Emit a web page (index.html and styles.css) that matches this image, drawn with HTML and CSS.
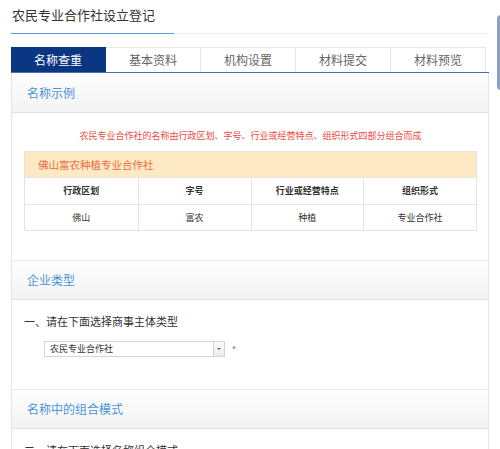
FILE: index.html
```html
<!DOCTYPE html>
<html lang="zh-CN">
<head>
<meta charset="utf-8">
<title>农民专业合作社设立登记</title>
<link rel="stylesheet" href="styles.css">
</head>
<body>
<div class="page">
  <div class="title">
    <div class="title-text">农民专业合作社设立登记</div>
    <div class="title-rest"></div>
  </div>
  <div class="tabs">
    <div class="tab active">名称查重</div>
    <div class="tab">基本资料</div>
    <div class="tab">机构设置</div>
    <div class="tab">材料提交</div>
    <div class="tab">材料预览</div>
  </div>
  <div class="panel">
    <div class="sec-head first">名称示例</div>
    <div class="sec-body example">
      <div class="note">农民专业合作社的名称由行政区划、字号、行业或经营特点、组织形式四部分组合而成</div>
      <div class="tbl">
        <div class="tbl-name">佛山富农种植专业合作社</div>
        <div class="tbl-row head">
          <div class="cell">行政区划</div>
          <div class="cell">字号</div>
          <div class="cell">行业或经营特点</div>
          <div class="cell">组织形式</div>
        </div>
        <div class="tbl-row data">
          <div class="cell">佛山</div>
          <div class="cell">富农</div>
          <div class="cell">种植</div>
          <div class="cell">专业合作社</div>
        </div>
      </div>
    </div>
    <div class="sec-head">企业类型</div>
    <div class="sec-body form">
      <div class="question">一、请在下面选择商事主体类型</div>
      <div class="select-line">
        <div class="select">
          <span class="select-value">农民专业合作社</span>
          <span class="select-arrow"></span>
        </div>
        <span class="required">*</span>
      </div>
    </div>
    <div class="sec-head">名称中的组合模式</div>
    <div class="sec-body form">
      <div class="question">二、请在下面选择名称组合模式</div>
    </div>
  </div>
</div>
<div class="side-tab"></div>
</body>
</html>
```

FILE: styles.css
```css
html, body {
  margin: 0;
  padding: 0;
  background: #fff;
}
body {
  font-family: "Noto Sans CJK SC", "Noto Sans", sans-serif;
  color: #333;
  overflow: hidden;
}
.page {
  width: 478px;
  padding-left: 11px;
}
.title {
  display: flex;
}
.title-text {
  width: 162px;
  height: 33px;
  line-height: 30px;
  padding-left: 1px;
  font-size: 13px;
  color: #333;
  border-bottom: 1px solid #5b9bdb;
}
.title-rest {
  flex: 1;
  border-bottom: 1px solid #eaf1f9;
}
.tabs {
  display: flex;
  margin-top: 13px;
  height: 25px;
  border-bottom: 1px solid #4470ad;
}
.tab {
  box-sizing: border-box;
  width: 95px;
  height: 25px;
  line-height: 24px;
  text-align: center;
  font-size: 12px;
  color: #666;
  border-top: 1px solid #e6e6e6;
  border-right: 1px solid #e6e6e6;
}
.tab.active {
  background: #0b3682;
  border-color: #0b3682;
  color: #fff;
}
.panel {
  border-left: 1px solid #e6e6e6;
  border-right: 1px solid #e6e6e6;
}
.sec-head {
  height: 38px;
  line-height: 38px;
  padding-left: 15px;
  font-size: 12px;
  color: #4a94d8;
  background: linear-gradient(#fefefe, #f3f3f3);
  border-top: 1px solid #e8e8e8;
  border-bottom: 1px solid #e2e2e2;
}
.sec-head.first {
  height: 39px;
  line-height: 39px;
  border-top: 0;
}
.sec-body.example {
  padding: 16px 11px 29px 12px;
}
.note {
  height: 13px;
  line-height: 13px;
  font-size: 9px;
  color: #ee4b3e;
  text-align: center;
}
.tbl {
  margin-top: 9px;
  border: 1px solid #e4e4e4;
}
.tbl-name {
  height: 25px;
  line-height: 25px;
  padding-left: 13px;
  background: #fde9c4;
  color: #ef6a3f;
  font-size: 10.5px;
}
.tbl-row {
  display: grid;
  grid-template-columns: 1fr 1fr 1fr 1fr;
  border-top: 1px solid #e4e4e4;
}
.tbl-row .cell {
  text-align: center;
  font-size: 9px;
  color: #333;
}
.tbl-row .cell + .cell {
  border-left: 1px solid #e4e4e4;
}
.tbl-row.head .cell {
  height: 26px;
  line-height: 26px;
  font-weight: bold;
}
.tbl-row.data .cell {
  height: 25px;
  line-height: 25px;
}
.sec-body.form {
  padding: 14px 12px 32px 12px;
}
.question {
  height: 14px;
  line-height: 14px;
  font-size: 11px;
  color: #333;
}
.select-line {
  display: flex;
  align-items: center;
  margin-top: 13px;
  margin-left: 20px;
}
.select {
  box-sizing: border-box;
  width: 181px;
  height: 16px;
  display: flex;
  border: 1px solid #d4d4d4;
  background: #fff;
}
.select-value {
  flex: 1;
  font-size: 9px;
  line-height: 14px;
  padding-left: 5px;
  color: #333;
}
.select-arrow {
  width: 10px;
  border-left: 1px solid #d4d4d4;
  background: linear-gradient(#fafafa, #ececec);
  position: relative;
}
.select-arrow::after {
  content: "";
  position: absolute;
  left: 3px;
  top: 6px;
  border-left: 2px solid transparent;
  border-right: 2px solid transparent;
  border-top: 2px solid #666;
}
.required {
  margin-left: 7px;
  font-size: 9px;
  line-height: 9px;
  color: #ef4b4b;
}
.side-tab {
  position: fixed;
  left: 497px;
  top: 15px;
  width: 12px;
  height: 75px;
  border-radius: 4px;
  background: #8c9ec4;
}
```
